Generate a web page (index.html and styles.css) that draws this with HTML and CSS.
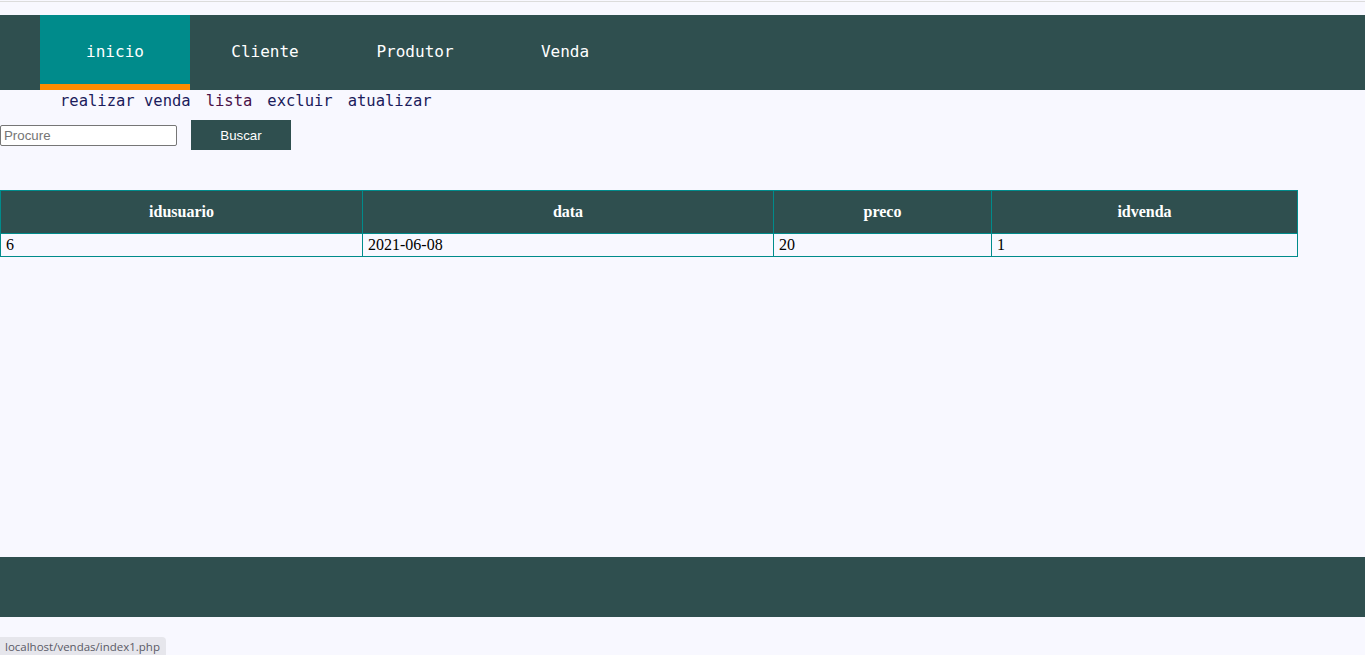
FILE: index.html
```html
<!DOCTYPE html>
<html lang="pt">
<head>
<meta charset="utf-8">
<title>Vendas</title>
<link rel="stylesheet" href="styles.css">
</head>
<body>
<div class="topline"></div>
<nav class="nav">
  <a class="nav-item active" href="#">inicio</a>
  <a class="nav-item" href="#">Cliente</a>
  <a class="nav-item" href="#">Produtor</a>
  <a class="nav-item" href="#">Venda</a>
</nav>
<div class="subnav">
  <a class="sub-link" href="#">realizar venda</a>
  <a class="sub-link visited" href="#">lista</a>
  <a class="sub-link" href="#">excluir</a>
  <a class="sub-link" href="#">atualizar</a>
</div>
<form class="search">
  <input class="search-input" type="text" placeholder="Procure">
  <button class="search-btn" type="button">Buscar</button>
</form>
<table class="grid">
  <colgroup>
    <col class="c1"><col class="c2"><col class="c3"><col class="c4">
  </colgroup>
  <thead>
    <tr><th>idusuario</th><th>data</th><th>preco</th><th>idvenda</th></tr>
  </thead>
  <tbody>
    <tr><td>6</td><td>2021-06-08</td><td>20</td><td>1</td></tr>
  </tbody>
</table>
<footer class="footer"></footer>
<div class="status">localhost/vendas/index1.php</div>
</body>
</html>
```
FILE: styles.css
```css
html, body {
  margin: 0;
  padding: 0;
  background: #f8f8ff;
}
body {
  font-family: "Liberation Serif", "Times New Roman", serif;
  font-size: 16px;
  color: #000;
  min-height: 655px;
}
.topline {
  height: 1px;
  margin-top: 1px;
  background: #dcdcdc;
}
.nav {
  margin-top: 13px;
  height: 75px;
  background: #2f4f4f;
  display: flex;
  padding-left: 40px;
}
.nav-item {
  box-sizing: border-box;
  width: 150px;
  height: 75px;
  display: flex;
  align-items: center;
  justify-content: center;
  padding-bottom: 2px;
  font-family: "DejaVu Sans Mono", "Liberation Mono", monospace;
  font-size: 16px;
  color: #fff;
  text-decoration: none;
}
.nav-item.active {
  background: #008b8b;
  border-bottom: 6px solid #ff8c00;
  padding-bottom: 0;
  padding-top: 4px;
}
.subnav {
  height: 22px;
  padding-left: 60px;
  display: flex;
  align-items: center;
  gap: 15px;
  font-family: "DejaVu Sans Mono", "Liberation Mono", monospace;
  font-size: 15.5px;
}
.sub-link {
  color: #1c1c5c;
  text-decoration: none;
}
.sub-link.visited {
  color: #4a1248;
}
.search {
  margin: 8px 0 0 0;
  display: flex;
  align-items: center;
  gap: 14px;
  height: 30px;
}
.search-input {
  box-sizing: border-box;
  width: 177px;
  height: 21px;
  margin: 0;
  padding: 1px 3px;
  border: 1px solid #767676;
  border-radius: 2px;
  background: #fff;
  font-family: "Liberation Sans", Arial, sans-serif;
  font-size: 13.3px;
}
.search-input::placeholder {
  color: #757575;
}
.search-btn {
  width: 100px;
  height: 30px;
  margin: 0;
  border: none;
  background: #2f4f4f;
  color: #fff;
  font-family: "Liberation Sans", Arial, sans-serif;
  font-size: 13.3px;
}
.grid {
  margin-top: 40px;
  width: 1297px;
  table-layout: fixed;
  border-collapse: collapse;
  border: 1px solid #008b8b;
}
.c1 { width: 362px; }
.c2 { width: 411px; }
.c3 { width: 218px; }
.c4 { width: 306px; }
.grid th {
  height: 42px;
  padding: 0;
  background: #2f4f4f;
  color: #fff;
  font-weight: bold;
  border: 1px solid #008b8b;
  text-align: center;
}
.grid td {
  height: 22px;
  padding: 0 5px;
  border: 1px solid #008b8b;
  text-align: left;
}
.footer {
  margin-top: 300px;
  height: 60px;
  background: #2f4f4f;
}
.status {
  position: fixed;
  left: 0;
  bottom: 0;
  height: 18px;
  padding: 0 6px 0 5px;
  background: #e6e6ec;
  border-top-right-radius: 4px;
  color: #5a5a66;
  font-family: "Open Sans", "Noto Sans", sans-serif;
  font-size: 11.5px;
  line-height: 19px;
}
```
